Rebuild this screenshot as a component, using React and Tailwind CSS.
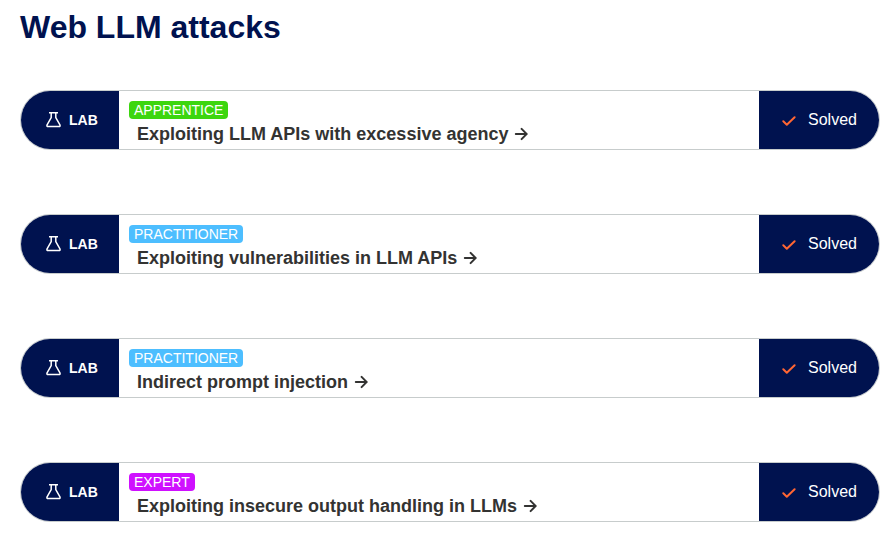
const labs = [
  { level: "APPRENTICE", title: "Exploiting LLM APIs with excessive agency", color: "bg-[#3cd60f]" },
  { level: "PRACTITIONER", title: "Exploiting vulnerabilities in LLM APIs", color: "bg-[#4dbeff]" },
  { level: "PRACTITIONER", title: "Indirect prompt injection", color: "bg-[#4dbeff]" },
  { level: "EXPERT", title: "Exploiting insecure output handling in LLMs", color: "bg-[#cf10ff]" },
];

function Flask() {
  return (
    <svg width="15" height="16" viewBox="0 0 15 16" fill="none" stroke="#fff" strokeWidth="1.5" strokeLinejoin="round" aria-hidden="true">
      <path d="M3 .8h9M5.2 .8v4.9L1.2 12.6q-.9 2 1 2h10.6q1.9 0 1-2L9.8 5.7V.8" />
    </svg>
  );
}

function Arrow() {
  return (
    <svg width="14" height="14" viewBox="0 0 14 14" fill="none" stroke="currentColor" strokeWidth="2" strokeLinecap="round" aria-hidden="true">
      <path d="M1.8 7h10.6M7.6 1.9L12.7 7l-5.1 5.1" />
    </svg>
  );
}

function Check() {
  return (
    <svg width="14" height="14" viewBox="0 0 14 14" fill="none" stroke="#ff6633" strokeWidth="2" strokeLinecap="round" strokeLinejoin="round" aria-hidden="true">
      <path d="M1.3 8.3l3.5 3.4 7.8-7.5" />
    </svg>
  );
}

function Lab({ lab }) {
  return (
    <li className="flex h-15 overflow-hidden rounded-full border border-[#c7cccc]">
      <div className="flex w-[98px] shrink-0 items-center gap-2 bg-[#00124f] pl-[25px] text-sm font-bold text-white">
        <Flask />
        <span>LAB</span>
      </div>
      <div className="flex min-w-0 flex-1 flex-col items-start pl-2.5 pt-2.5">
        <span className={`rounded-sm px-[5px] text-sm leading-[18px] text-white ${lab.color}`}>{lab.level}</span>
        <a href="#lab" className="flex items-center gap-1.5 pl-2 text-lg leading-[30px] font-bold text-[#333332]">
          {lab.title}
          <Arrow />
        </a>
      </div>
      <div className="flex w-[120px] shrink-0 items-center gap-3 bg-[#00124f] pl-[23px] text-base text-white">
        <Check />
        <span>Solved</span>
      </div>
    </li>
  );
}

export default function App() {
  return (
    <main className="bg-white pt-1.5 pr-4 pl-5 font-['Liberation_Sans',Arial,sans-serif]">
      <h1 className="text-[32px] leading-[42px] font-bold text-[#00124f]">Web LLM attacks</h1>
      <ul className="mt-[42px] flex flex-col gap-16">
        {labs.map((lab) => (
          <Lab key={lab.title} lab={lab} />
        ))}
      </ul>
    </main>
  );
}
